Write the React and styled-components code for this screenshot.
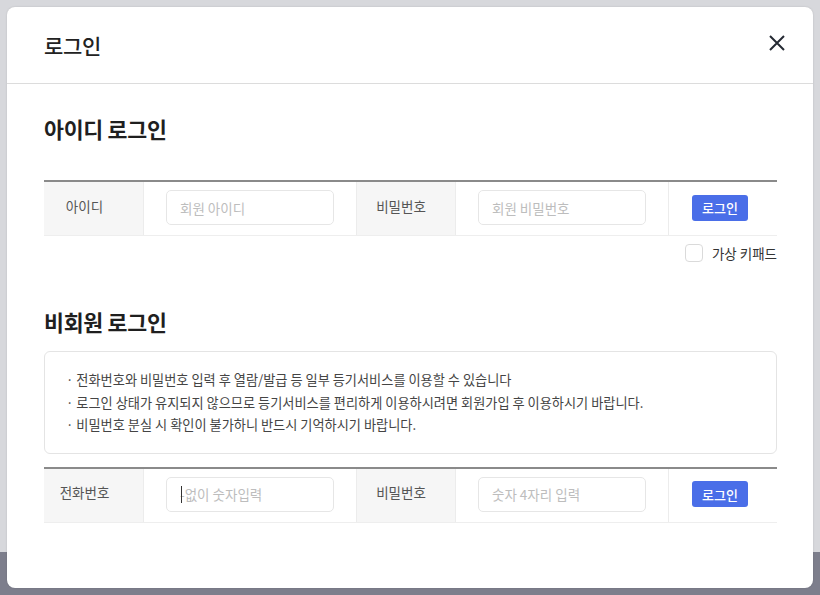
import React from "react";
import styled, { createGlobalStyle } from "styled-components";

const Global = createGlobalStyle`
  html, body { margin: 0; padding: 0; }
  body {
    width: 820px;
    height: 595px;
    overflow: hidden;
    font-family: "Noto Sans CJK KR", "Noto Sans", sans-serif;
    background: linear-gradient(to bottom, #d7d8dc 0, #d7d8dc 552px, #7d7e8c 552px, #7d7e8c 100%);
  }
  * { box-sizing: border-box; }
`;

const Backdrop = styled.div`
  padding: 7px;
  height: 595px;
`;

const Modal = styled.div`
  width: 806px;
  height: 581px;
  background: #fff;
  border-radius: 8px;
  box-shadow: 0 0 2px rgba(0, 0, 0, 0.15);
  display: flex;
  flex-direction: column;
  overflow: hidden;
`;

const Header = styled.div`
  height: 77px;
  flex-shrink: 0;
  border-bottom: 1px solid #dcdcdc;
  display: flex;
  align-items: center;
  justify-content: space-between;
  padding: 0 24px 0 37px;
`;

const Title = styled.h1`
  margin: 0 0 0;
  font-size: 21px;
  font-weight: 500;
  color: #222;
  letter-spacing: -0.3px;
`;

const CloseBtn = styled.button`
  width: 24px;
  height: 24px;
  border: 0;
  background: none;
  padding: 0;
  margin-bottom: 5px;
  display: flex;
  align-items: center;
  justify-content: center;
  cursor: pointer;
`;

const Body = styled.div`
  padding: 30px 36px 0 37px;
`;

const SectionTitle = styled.h2`
  margin: 0;
  font-size: 21.7px;
  line-height: 30px;
  font-weight: 700;
  color: #1f1f1f;
  letter-spacing: -0.3px;
`;

const Table = styled.div`
  display: grid;
  grid-template-columns: 99px 213px 99px 213px 1fr;
  border-top: 2px solid #8a8a8a;
  border-bottom: 1px solid #eeeeee;
  margin-top: ${(p) => p.$mt}px;
`;

const Cell = styled.div`
  position: relative;
  height: 53px;
  display: flex;
  align-items: center;
  border-left: ${(p) => (p.$first ? "0" : "1px solid #ececec")};
  background: ${(p) => (p.$label ? "#f6f6f6" : "#fff")};
  justify-content: ${(p) => (p.$label ? "center" : "flex-start")};
  padding: ${(p) =>
    p.$label ? `0 ${p.$pr || 0}px 6px 0` : p.$btn ? "0 0 0 23px" : "0 22px"};
  font-size: 13.5px;
  color: #555;
`;

const Input = styled.input`
  width: 100%;
  height: 35px;
  border: 1px solid #e6e6e6;
  border-radius: 5px;
  padding: 0 13px;
  font-family: inherit;
  font-size: 13.5px;
  color: #333;
  caret-color: #333;
  outline: none;
  margin-top: -2px;
  &::placeholder { color: #bdbdbd; }
`;

const Caret = styled.span`
  position: absolute;
  left: 37px;
  top: 17px;
  width: 1px;
  height: 17px;
  background: #333;
`;

const LoginBtn = styled.button`
  height: 26px;
  padding: 0 10px;
  border: 0;
  border-radius: 3px;
  background: #4a6ee8;
  color: #fff;
  font-family: inherit;
  font-size: 13px;
  font-weight: 500;
  cursor: pointer;
  margin-top: -2px;
`;

const CheckRow = styled.label`
  display: flex;
  justify-content: flex-end;
  align-items: center;
  gap: 9px;
  margin-top: 7px;
  font-size: 13.5px;
  color: #333;
`;

const CheckBox = styled.span`
  width: 18px;
  height: 18px;
  border: 1px solid #dadada;
  border-radius: 4px;
  background: #fff;
`;

const Notice = styled.ul`
  list-style: none;
  margin: 14px 0 0;
  padding: 17px 21px 16px;
  border: 1px solid #e4e4e4;
  border-radius: 6px;
`;

const NoticeItem = styled.li`
  font-size: 13.2px;
  line-height: 22.5px;
  color: #444;
  letter-spacing: 0;
  &::before { content: "· "; }
`;

const Gap = styled.div`
  height: ${(p) => p.$h}px;
`;

function CloseIcon() {
  return (
    <svg width="18" height="18" viewBox="0 0 18 18">
      <path d="M2 2 L16 16 M16 2 L2 16" stroke="#252a33" strokeWidth="2" strokeLinecap="butt" />
    </svg>
  );
}

function LoginTable({ mt, label1, ph1, label2, ph2, focus }) {
  return (
    <Table $mt={mt}>
      <Cell $label $first $pr={18}>{label1}</Cell>
      <Cell>
        <Input placeholder={ph1} />
        {focus && <Caret />}
      </Cell>
      <Cell $label $pr={10}>{label2}</Cell>
      <Cell>
        <Input type="password" placeholder={ph2} />
      </Cell>
      <Cell $btn>
        <LoginBtn>로그인</LoginBtn>
      </Cell>
    </Table>
  );
}

export default function App() {
  return (
    <>
      <Global />
      <Backdrop>
        <Modal>
          <Header>
            <Title>로그인</Title>
            <CloseBtn aria-label="닫기">
              <CloseIcon />
            </CloseBtn>
          </Header>
          <Body>
            <SectionTitle>아이디 로그인</SectionTitle>
            <LoginTable mt={36} label1="아이디" ph1="회원 아이디" label2="비밀번호" ph2="회원 비밀번호" />
            <CheckRow>
              <CheckBox />
              가상 키패드
            </CheckRow>
            <Gap $h={44} />
            <SectionTitle>비회원 로그인</SectionTitle>
            <Notice>
              <NoticeItem>전화번호와 비밀번호 입력 후 열람/발급 등 일부 등기서비스를 이용할 수 있습니다</NoticeItem>
              <NoticeItem>로그인 상태가 유지되지 않으므로 등기서비스를 편리하게 이용하시려면 회원가입 후 이용하시기 바랍니다.</NoticeItem>
              <NoticeItem>비밀번호 분실 시 확인이 불가하니 반드시 기억하시기 바랍니다.</NoticeItem>
            </Notice>
            <LoginTable mt={13} label1="전화번호" ph1="-없이 숫자입력" label2="비밀번호" ph2="숫자 4자리 입력" focus />
          </Body>
        </Modal>
      </Backdrop>
    </>
  );
}
